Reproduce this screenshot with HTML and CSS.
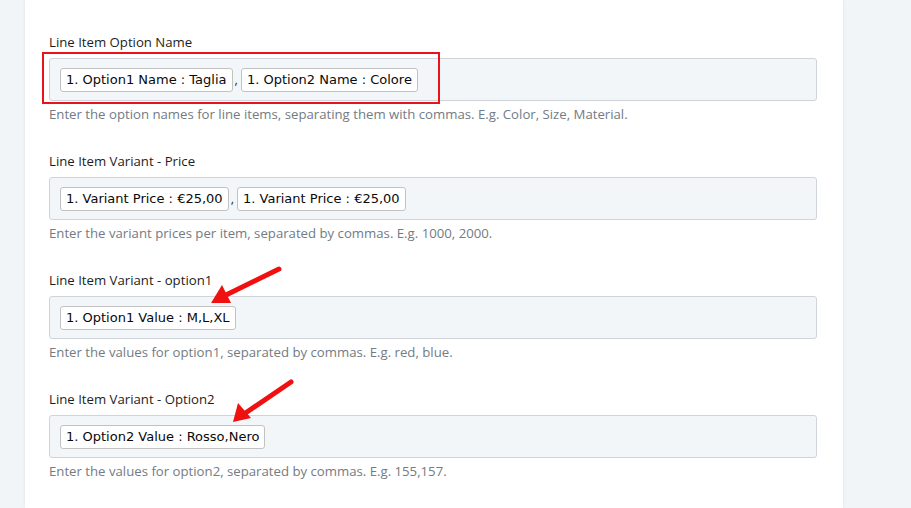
FILE: index.html
```html
<!DOCTYPE html>
<html lang="en">
<head>
  <meta charset="UTF-8" />
  <title>Line Item Options</title>
  <link rel="stylesheet" href="styles.css">
</head>
<body>
  <div class="card">
    <div class="field">
      <label class="field-label">Line Item Option Name</label>
      <div class="tag-box">
        <span class="tag">1. Option1 Name : Taglia</span><span class="sep">,</span><span class="tag">1. Option2 Name : Colore</span>
      </div>
      <p class="help">Enter the option names for line items, separating them with commas. E.g. Color, Size, Material.</p>
    </div>

    <div class="field">
      <label class="field-label">Line Item Variant - Price</label>
      <div class="tag-box">
        <span class="tag">1. Variant Price : €25,00</span><span class="sep">,</span><span class="tag">1. Variant Price : €25,00</span>
      </div>
      <p class="help">Enter the variant prices per item, separated by commas. E.g. 1000, 2000.</p>
    </div>

    <div class="field">
      <label class="field-label">Line Item Variant - option1</label>
      <div class="tag-box">
        <span class="tag">1. Option1 Value : M,L,XL</span>
      </div>
      <p class="help">Enter the values for option1, separated by commas. E.g. red, blue.</p>
    </div>

    <div class="field">
      <label class="field-label">Line Item Variant - Option2</label>
      <div class="tag-box">
        <span class="tag">1. Option2 Value : Rosso,Nero</span>
      </div>
      <p class="help">Enter the values for option2, separated by commas. E.g. 155,157.</p>
    </div>
  </div>

  <!-- red markup drawn on top of the form -->
  <svg class="marks" width="911" height="508" viewBox="0 0 911 508">
    <rect x="43" y="53" width="396" height="50" fill="none" stroke="#e8141b" stroke-width="2"/>
    <g stroke="#f01010" stroke-width="5" stroke-linecap="round" fill="#f01010">
      <line x1="279" y1="269" x2="226" y2="295"/>
      <line x1="291" y1="382" x2="244" y2="414"/>
    </g>
    <g fill="#f01010">
      <polygon points="211,303 222,285 231,303"/>
      <polygon points="233,422 238,403 251,418"/>
    </g>
  </svg>
</body>
</html>
```

FILE: styles.css
```css
body {
  margin: 0;
  background: #f2f5f8;
  font-family: "Open Sans", sans-serif;
  position: relative;
  height: 508px;
  overflow: hidden;
}
.card {
  margin-left: 25px;
  width: 818px;
  height: 508px;
  box-sizing: border-box;
  background: #fff;
  padding: 33px 26px 0 24px;
  box-shadow: 0 0 3px rgba(0, 0, 0, 0.08);
}
.field {
  margin-bottom: 29px;
}
.field-label {
  display: block;
  font-size: 13.2px;
  line-height: 18px;
  color: #1d1d1d;
  margin-bottom: 7px;
}
.tag-box {
  display: flex;
  align-items: baseline;
  background: #f3f6f9;
  border: 1px solid #cfd4db;
  border-radius: 3px;
  padding: 9px 10px 8px;
}
.tag {
  display: inline-block;
  height: 22px;
  line-height: 22px;
  padding: 0 5px;
  background: #fff;
  border: 1px solid #c2c2c2;
  border-radius: 3px;
  font-family: "DejaVu Sans", sans-serif;
  font-size: 13px;
  color: #0a0a0a;
}
.sep {
  margin: 0 3px 0 2px;
  font-size: 13px;
  color: #333;
}
.help {
  margin: 4px 0 0;
  font-size: 13.2px;
  line-height: 18px;
  color: #737b84;
}
.marks {
  position: absolute;
  left: 0;
  top: 0;
  pointer-events: none;
}
```
